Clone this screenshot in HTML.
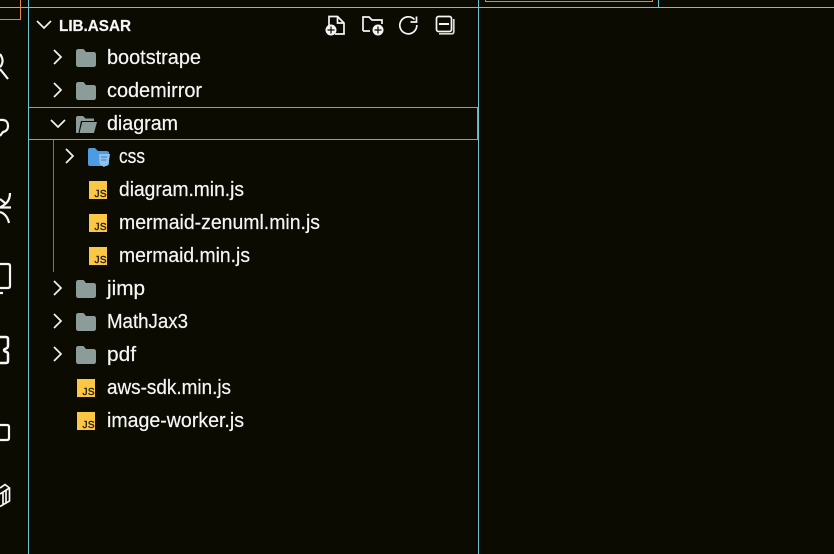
<!DOCTYPE html>
<html><head><meta charset="utf-8"><style>
html,body{margin:0;padding:0;background:#0b0b02;width:834px;height:554px;overflow:hidden}
svg{display:block;position:absolute;left:0;top:0}
text{font-family:"Liberation Sans",sans-serif;font-size:20px;fill:#f6f6f6;stroke:#f6f6f6;stroke-width:.2px}
</style></head><body>
<svg width="834" height="554" viewBox="0 0 834 554" xmlns="http://www.w3.org/2000/svg">
<defs>
<g id="cl"><path d="M-4-7L3 0L-4 7" fill="none" stroke="#f2f2f2" stroke-width="1.700"/></g>
<g id="f"><path d="M0 2.500Q0 0 2.500 0H7.500L10 3H17.500Q20 3 20 5.500V15.500Q20 18 17.500 18H2.500Q0 18 0 15.500Z" fill="#8b9c99"/></g>
<g id="js"><rect width="18" height="18" fill="#fcc745"/><text x="5.500" y="16" style="font-size:10px;font-weight:normal;fill:#2b2410;stroke:#2b2410;stroke-width:.4px;letter-spacing:.4px">JS</text></g>
</defs>
<rect width="834" height="554" fill="#0b0b02"/>
<!-- layout lines -->
<path d="M28.500 0V554M478.500 0V554M658.500 0V7M0 7.500H834" stroke="#6cc4d4" stroke-width="1" fill="none"/>
<path d="M485.500 0V1.500H652.500V0" stroke="#e08c3a" stroke-width="1" fill="none"/>
<path d="M20.500 0V19.500H0" stroke="#e08c3a" stroke-width="1" fill="none"/>
<!-- selected row -->
<path d="M29 107.500H478M29 139.500H478M477.500 107V140" stroke="#e08c3a" stroke-width="1" fill="none"/>
<!-- guide -->
<path d="M53.500 140V272" stroke="#77776f" stroke-width="1"/>
<!-- header -->
<path d="M37 21L44 28L51 21" fill="none" stroke="#f2f2f2" stroke-width="1.700"/>
<text x="59" y="31" textLength="72" lengthAdjust="spacingAndGlyphs" style="font-weight:bold;font-size:16px">LIB.ASAR</text>
<!-- header actions -->
<g fill="none" stroke="#f6f6f6" stroke-width="1.700">
<path d="M329 26V16.500H337.500L344 23V34H335"/><path d="M337.500 16.500V23H344"/>
<circle cx="331" cy="30" r="5.500" fill="#f6f6f6" stroke="none"/>
<path d="M327.500 30H334.500M331 26.500V33.500" stroke="#0b0b02" stroke-width="1.200"/>
<path d="M363 31V17H369L372 20H382V24M363 31H370"/><circle cx="378" cy="30" r="5.500" fill="#f6f6f6" stroke="none"/><path d="M374.500 30H381.500M378 26.500V33.500" stroke="#0b0b02" stroke-width="1.200"/>
<path d="M414.500 19.500A8.500 8.500 0 1 0 416.800 25"/><path d="M410.500 22H416.500V16.500" stroke-width="1.700"/>
<rect x="436.500" y="16.500" width="15" height="15" rx="2"/><path d="M453.800 19V31.500Q453.800 33.800 451.500 33.800H439" stroke="#d8d8d0"/><path d="M439 24H449" stroke-width="2"/>
</g>
<!-- tree -->
<use href="#cl" x="58" y="57"/><use href="#f" x="76" y="49"/>
<text x="107" y="64" textLength="94" lengthAdjust="spacingAndGlyphs">bootstrape</text>
<use href="#cl" x="58" y="90"/><use href="#f" x="76" y="82"/>
<text x="107" y="97" textLength="95" lengthAdjust="spacingAndGlyphs">codemirror</text>
<path d="M51 120L58 127L65 120" fill="none" stroke="#f2f2f2" stroke-width="1.700"/>
<path d="M76 133V118Q76 116 78 116H83L85.500 118.500H94V121H81L78.500 133Z" fill="#8b9c99"/><path d="M79.500 133L82.200 122H97L94 133Z" fill="#8b9c99"/>
<text x="107" y="130" textLength="71" lengthAdjust="spacingAndGlyphs">diagram</text>
<use href="#cl" x="70" y="156"/>
<path d="M88 150Q88 148 90 148H95L98 151H106Q109 151 109 153V163Q109 166 106 166H90Q88 166 88 164Z" fill="#4d9be0"/>
<path d="M99 154H110L108.500 164L104 167L99.500 164Z" fill="#8fc3ee"/><path d="M101 157H107M101 160H106.500" stroke="#3f80bd" stroke-width="1"/>
<text x="119" y="163" textLength="26" lengthAdjust="spacingAndGlyphs">css</text>
<use href="#js" x="89" y="181"/>
<text x="119" y="196" textLength="125" lengthAdjust="spacingAndGlyphs">diagram.min.js</text>
<use href="#js" x="89" y="214"/>
<text x="119" y="229" textLength="201" lengthAdjust="spacingAndGlyphs">mermaid-zenuml.min.js</text>
<use href="#js" x="89" y="247"/>
<text x="119" y="262" textLength="131" lengthAdjust="spacingAndGlyphs">mermaid.min.js</text>
<use href="#cl" x="58" y="288"/><use href="#f" x="76" y="280"/>
<text x="107" y="295" textLength="38" lengthAdjust="spacingAndGlyphs">jimp</text>
<use href="#cl" x="58" y="321"/><use href="#f" x="76" y="313"/>
<text x="107" y="328" textLength="81" lengthAdjust="spacingAndGlyphs">MathJax3</text>
<use href="#cl" x="58" y="354"/><use href="#f" x="76" y="346"/>
<text x="107" y="361" textLength="29" lengthAdjust="spacingAndGlyphs">pdf</text>
<use href="#js" x="77" y="379"/>
<text x="107" y="394" textLength="124" lengthAdjust="spacingAndGlyphs">aws-sdk.min.js</text>
<use href="#js" x="77" y="412"/>
<text x="107" y="427" textLength="137" lengthAdjust="spacingAndGlyphs">image-worker.js</text>
<!-- activity bar clipped icons -->
<g fill="none" stroke="#f6f6f6" stroke-width="2.200">
<path d="M0 54Q3 58 2.500 62Q1.500 66 0 67"/><path d="M0 69L8 79"/>
<path d="M0 120Q8 119 8 126Q8 131 3 132L0 136"/>
<path d="M0 199L5 203M10 193Q10 201 4 205L0 207.500H11M0 212Q7 214 9 223"/>
<path d="M0 264H8Q10 264 10 266V286Q10 288 8 288H0M0 293H3"/>
<path d="M0 337H6Q8 337 8 339V346Q8 348 5 349Q3 350 5 351.500Q8 352 8 354V361Q8 363 6 363H0" stroke-width="2.500"/>
<path d="M0 425H7Q9 425 9 427V438Q9 440 7 440H0"/>
<path d="M0 488L5 484.500L9.500 488V501L0 506.500M0 494L9.500 488M3 493V505M6 491V503" stroke-width="1.700"/>
</g>
</svg>
</body></html>
